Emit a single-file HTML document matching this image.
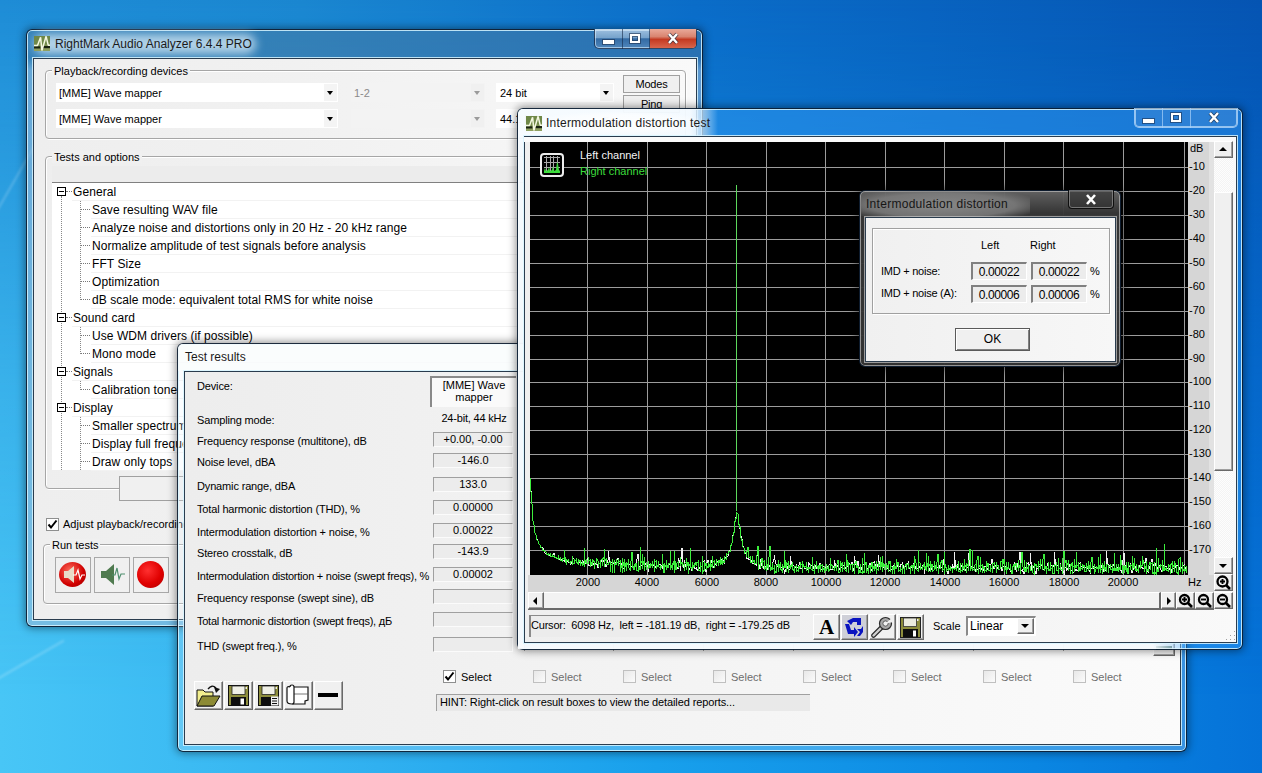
<!DOCTYPE html><html><head><meta charset="utf-8"><title>RMAA</title><style>
*{margin:0;padding:0;box-sizing:border-box}
html,body{width:1262px;height:773px;overflow:hidden}
body{position:relative;font-family:"Liberation Sans",sans-serif;font-size:11px;color:#000;
background:#1a88d8;}
.a{position:absolute}
.t{position:absolute;white-space:nowrap;line-height:1}
.fr{position:absolute;border:1px solid rgba(10,25,45,0.92);border-radius:6px;box-shadow:inset 0 0 0 1px rgba(215,245,255,0.85),0 0 9px 1px rgba(0,0,0,0.45)}
.cl{position:absolute;background:#f0f0f0;border:1px solid rgba(20,40,60,0.9);box-shadow:0 0 0 1px rgba(215,245,255,0.85)}
.gb{position:absolute;border:1px solid #a6a6a6;border-radius:4px;box-shadow:inset 1px 1px 0 #fff,1px 1px 0 #fff}
.gbl{position:absolute;background:#f0f0f0;padding:0 2px;font-size:11px;line-height:12px}
.btn{position:absolute;background:linear-gradient(#f4f4f4,#ececec 50%,#dfdfdf 51%,#d2d2d2);border:1px solid #707070;border-radius:3px}
.sb{position:absolute;background:#f0f0f0;border-top:1px solid #fff;border-left:1px solid #fff;border-right:1px solid #696969;border-bottom:1px solid #696969;box-shadow:inset -1px -1px 0 #a0a0a0}
.vb{position:absolute;background:#ececec;border-top:1px solid #a0a0a0;border-left:1px solid #a0a0a0;border-right:1px solid #fbfbfb;border-bottom:1px solid #fbfbfb;text-align:center;font-size:11px;line-height:13px}
.cb{position:absolute;width:13px;height:13px;border:1px solid #8e8f8f;background:linear-gradient(135deg,#dcdcdc,#fbfbfb)}
.cbd{position:absolute;width:13px;height:13px;border:1px solid #c0c0c0;background:linear-gradient(135deg,#e8e8e8,#fbfbfb)}
</style></head><body>
<div class="a" style="left:0;top:0;width:1262px;height:773px;background:linear-gradient(90deg,#48c6f6 0%,#30b0f0 30%,#18a0ec 52%,#0a86e2 82%,#0572d8 100%)"></div>
<div class="a" style="left:0;top:0;width:1262px;height:773px;background:linear-gradient(90deg,#1e8cd6 0%,#1a86d0 24%,#0a6cc8 55%,#0554b2 100%);-webkit-mask-image:linear-gradient(180deg,#000 0%,rgba(0,0,0,0.75) 20%,rgba(0,0,0,0.35) 50%,rgba(0,0,0,0) 90%)"></div>
<div class="a" style="left:-20px;top:662px;width:90px;height:2px;background:rgba(255,255,255,0.22);transform:rotate(-30deg);filter:blur(0.8px)"></div>
<div class="a" style="left:-40px;top:170px;width:120px;height:2px;background:rgba(255,255,255,0.2);transform:rotate(-60deg);filter:blur(1px)"></div>
<div class="fr" style="left:26px;top:29px;width:677px;height:598px;background:linear-gradient(180deg,rgba(85,115,145,0.42),rgba(85,115,145,0.42) 28px,rgba(170,188,212,0.5) 40px)"></div>
<div class="a" style="left:34px;top:34px;width:222px;height:20px;border-radius:10px;background:rgba(225,240,250,0.72);filter:blur(5px)"></div>
<svg class="a" style="left:34px;top:36px" width="16" height="15" viewBox="0 0 16 15"><rect width="16" height="15" fill="#7a9050"/><rect y="0" width="16" height="8" fill="#6f8848"/><rect y="11" width="16" height="4" fill="#8fa060"/><rect y="10.3" width="6.5" height="2.2" fill="#1a2410"/><rect x="9" y="10" width="7" height="2.2" fill="#1a2410"/><path d="M0 9.6 L3.5 9.6 L6.6 1.2 L7.9 14.5 L12.1 0.3 L14.2 9.2 L16 9.2" stroke="#f4f8e0" stroke-width="1.5" fill="none" stroke-linejoin="bevel"/></svg>
<div class="t" style="left:55px;top:38px;font-size:12px;color:#1a1a1a">RightMark Audio Analyzer 6.4.4 PRO</div>
<div class="a" style="left:594px;top:29px;width:103px;height:20px;border:1px solid rgba(20,40,70,0.8);border-top:none;border-radius:0 0 5px 5px;box-shadow:inset 0 0 0 1px rgba(220,240,255,0.6);background:linear-gradient(rgba(200,220,240,0.75),rgba(170,195,220,0.6) 45%,rgba(60,100,150,0.55) 52%,rgba(110,150,195,0.55));overflow:hidden"></div>
<div class="a" style="left:622px;top:29px;width:1px;height:20px;background:rgba(20,40,70,0.6)"></div>
<div class="a" style="left:649px;top:29px;width:1px;height:20px;background:rgba(20,40,70,0.6)"></div>
<div class="a" style="left:650px;top:29px;width:46px;height:19px;border-radius:0 0 4px 0;background:linear-gradient(#e9a99a,#d98470 40%,#c43a22 55%,#d8654c)"></div>
<div class="a" style="left:603px;top:40px;width:11px;height:4px;background:#fff;box-shadow:0 0 0 1px rgba(30,50,80,0.6)"></div>
<div class="a" style="left:630px;top:34px;width:10px;height:9px;border:2px solid #fff;box-shadow:0 0 0 1px rgba(30,50,80,0.6),inset 0 0 0 1px rgba(30,50,80,0.6)"></div>
<svg class="a" style="left:666px;top:32px" width="14" height="13"><path d="M3 2 L11 11 M11 2 L3 11" stroke="rgba(30,40,60,0.7)" stroke-width="4"/><path d="M3 2 L11 11 M11 2 L3 11" stroke="#fff" stroke-width="2.4"/></svg>
<div class="cl" style="left:33px;top:58px;width:664px;height:562px;background:linear-gradient(90deg,#eeeeee,#f1f1f1 40%,#f9f9f9)"></div>
<div class="gb" style="left:45px;top:70px;width:641px;height:69px"></div>
<div class="gbl" style="left:52px;top:65px">Playback/recording devices</div>
<div class="a" style="left:56px;top:83px;width:282px;height:19px;background:#ffffff"></div>
<div class="t" style="left:59px;top:88px;font-size:11px;color:#000">[MME] Wave mapper</div>
<div class="a" style="left:324px;top:84px;width:13px;height:17px;background:#f4f4f4"></div>
<div class="a" style="left:327px;top:91px;width:0;height:0;border-left:3.5px solid transparent;border-right:3.5px solid transparent;border-top:4px solid #000"></div>
<div class="a" style="left:351px;top:83px;width:134px;height:19px;background:#f3f3f3"></div>
<div class="t" style="left:354px;top:88px;font-size:11px;color:#8a8a8a">1-2</div>
<div class="a" style="left:471px;top:84px;width:13px;height:17px;background:#f0f0f0"></div>
<div class="a" style="left:474px;top:91px;width:0;height:0;border-left:3.5px solid transparent;border-right:3.5px solid transparent;border-top:4px solid #9a9a9a"></div>
<div class="a" style="left:496px;top:83px;width:118px;height:19px;background:#ffffff"></div>
<div class="t" style="left:500px;top:88px;font-size:11px;color:#000">24 bit</div>
<div class="a" style="left:600px;top:84px;width:13px;height:17px;background:#f4f4f4"></div>
<div class="a" style="left:603px;top:91px;width:0;height:0;border-left:3.5px solid transparent;border-right:3.5px solid transparent;border-top:4px solid #000"></div>
<div class="a" style="left:56px;top:109px;width:282px;height:19px;background:#ffffff"></div>
<div class="t" style="left:59px;top:114px;font-size:11px;color:#000">[MME] Wave mapper</div>
<div class="a" style="left:324px;top:110px;width:13px;height:17px;background:#f4f4f4"></div>
<div class="a" style="left:327px;top:117px;width:0;height:0;border-left:3.5px solid transparent;border-right:3.5px solid transparent;border-top:4px solid #000"></div>
<div class="a" style="left:351px;top:109px;width:134px;height:19px;background:#f3f3f3"></div>
<div class="t" style="left:354px;top:114px;font-size:11px;color:#8a8a8a"></div>
<div class="a" style="left:471px;top:110px;width:13px;height:17px;background:#f0f0f0"></div>
<div class="a" style="left:474px;top:117px;width:0;height:0;border-left:3.5px solid transparent;border-right:3.5px solid transparent;border-top:4px solid #9a9a9a"></div>
<div class="a" style="left:496px;top:109px;width:118px;height:19px;background:#ffffff"></div>
<div class="t" style="left:500px;top:114px;font-size:11px;color:#000">44.1 kHz</div>
<div class="a" style="left:600px;top:110px;width:13px;height:17px;background:#f4f4f4"></div>
<div class="a" style="left:603px;top:117px;width:0;height:0;border-left:3.5px solid transparent;border-right:3.5px solid transparent;border-top:4px solid #000"></div>
<div class="a" style="left:623px;top:75px;width:57px;height:18px;border:1px solid #a0a0a0;background:#f0f0f0"></div>
<div class="t" style="left:623px;top:79px;width:57px;text-align:center;font-size:11px;letter-spacing:-0.2px">Modes</div>
<div class="a" style="left:623px;top:95px;width:57px;height:18px;border:1px solid #a0a0a0;background:#f0f0f0"></div>
<div class="t" style="left:623px;top:99px;width:57px;text-align:center;font-size:11px;letter-spacing:-0.2px">Ping</div>
<div class="gb" style="left:45px;top:156px;width:641px;height:333px"></div>
<div class="gbl" style="left:52px;top:151px">Tests and options</div>
<div class="a" style="left:52px;top:166px;width:628px;height:304px;background:#fff"></div>
<div class="a" style="left:52px;top:166px;width:628px;height:17px;background:#ececec;border-bottom:1px solid #808080"></div>
<div class="a" style="left:61px;top:196px;width:0;height:274px;border-left:1px dotted #888"></div>
<div class="a" style="left:80px;top:200px;width:0;height:100px;border-left:1px dotted #888"></div>
<div class="a" style="left:80px;top:326px;width:0;height:28px;border-left:1px dotted #888"></div>
<div class="a" style="left:80px;top:380px;width:0;height:10px;border-left:1px dotted #888"></div>
<div class="a" style="left:80px;top:416px;width:0;height:54px;border-left:1px dotted #888"></div>
<div class="a" style="left:72px;top:200px;width:600px;height:1px;background:#f2f2f2"></div>
<div class="a" style="left:57px;top:187px;width:9px;height:9px;border:1px solid #000;background:#fff"></div>
<div class="a" style="left:59px;top:191px;width:5px;height:1px;background:#000"></div>
<div class="a" style="left:66px;top:191px;width:6px;height:0;border-top:1px dotted #777"></div>
<div class="t" style="left:73px;top:186px;font-size:12px;letter-spacing:0.07px">General</div>
<div class="a" style="left:91px;top:218px;width:600px;height:1px;background:#f2f2f2"></div>
<div class="a" style="left:81px;top:209px;width:9px;height:0;border-top:1px dotted #777"></div>
<div class="t" style="left:92px;top:204px;font-size:12px;letter-spacing:0.07px">Save resulting WAV file</div>
<div class="a" style="left:91px;top:236px;width:600px;height:1px;background:#f2f2f2"></div>
<div class="a" style="left:81px;top:227px;width:9px;height:0;border-top:1px dotted #777"></div>
<div class="t" style="left:92px;top:222px;font-size:12px;letter-spacing:0.07px">Analyze noise and distortions only in 20 Hz - 20 kHz range</div>
<div class="a" style="left:91px;top:254px;width:600px;height:1px;background:#f2f2f2"></div>
<div class="a" style="left:81px;top:245px;width:9px;height:0;border-top:1px dotted #777"></div>
<div class="t" style="left:92px;top:240px;font-size:12px;letter-spacing:0.07px">Normalize amplitude of test signals before analysis</div>
<div class="a" style="left:91px;top:272px;width:600px;height:1px;background:#f2f2f2"></div>
<div class="a" style="left:81px;top:263px;width:9px;height:0;border-top:1px dotted #777"></div>
<div class="t" style="left:92px;top:258px;font-size:12px;letter-spacing:0.07px">FFT Size</div>
<div class="a" style="left:91px;top:290px;width:600px;height:1px;background:#f2f2f2"></div>
<div class="a" style="left:81px;top:281px;width:9px;height:0;border-top:1px dotted #777"></div>
<div class="t" style="left:92px;top:276px;font-size:12px;letter-spacing:0.07px">Optimization</div>
<div class="a" style="left:91px;top:308px;width:600px;height:1px;background:#f2f2f2"></div>
<div class="a" style="left:81px;top:299px;width:9px;height:0;border-top:1px dotted #777"></div>
<div class="t" style="left:92px;top:294px;font-size:12px;letter-spacing:0.07px">dB scale mode: equivalent total RMS for white noise</div>
<div class="a" style="left:72px;top:326px;width:600px;height:1px;background:#f2f2f2"></div>
<div class="a" style="left:57px;top:313px;width:9px;height:9px;border:1px solid #000;background:#fff"></div>
<div class="a" style="left:59px;top:317px;width:5px;height:1px;background:#000"></div>
<div class="a" style="left:66px;top:317px;width:6px;height:0;border-top:1px dotted #777"></div>
<div class="t" style="left:73px;top:312px;font-size:12px;letter-spacing:0.07px">Sound card</div>
<div class="a" style="left:91px;top:344px;width:600px;height:1px;background:#f2f2f2"></div>
<div class="a" style="left:81px;top:335px;width:9px;height:0;border-top:1px dotted #777"></div>
<div class="t" style="left:92px;top:330px;font-size:12px;letter-spacing:0.07px">Use WDM drivers (if possible)</div>
<div class="a" style="left:91px;top:362px;width:600px;height:1px;background:#f2f2f2"></div>
<div class="a" style="left:81px;top:353px;width:9px;height:0;border-top:1px dotted #777"></div>
<div class="t" style="left:92px;top:348px;font-size:12px;letter-spacing:0.07px">Mono mode</div>
<div class="a" style="left:72px;top:380px;width:600px;height:1px;background:#f2f2f2"></div>
<div class="a" style="left:57px;top:367px;width:9px;height:9px;border:1px solid #000;background:#fff"></div>
<div class="a" style="left:59px;top:371px;width:5px;height:1px;background:#000"></div>
<div class="a" style="left:66px;top:371px;width:6px;height:0;border-top:1px dotted #777"></div>
<div class="t" style="left:73px;top:366px;font-size:12px;letter-spacing:0.07px">Signals</div>
<div class="a" style="left:91px;top:398px;width:600px;height:1px;background:#f2f2f2"></div>
<div class="a" style="left:81px;top:389px;width:9px;height:0;border-top:1px dotted #777"></div>
<div class="t" style="left:92px;top:384px;font-size:12px;letter-spacing:0.07px">Calibration tone</div>
<div class="a" style="left:72px;top:416px;width:600px;height:1px;background:#f2f2f2"></div>
<div class="a" style="left:57px;top:403px;width:9px;height:9px;border:1px solid #000;background:#fff"></div>
<div class="a" style="left:59px;top:407px;width:5px;height:1px;background:#000"></div>
<div class="a" style="left:66px;top:407px;width:6px;height:0;border-top:1px dotted #777"></div>
<div class="t" style="left:73px;top:402px;font-size:12px;letter-spacing:0.07px">Display</div>
<div class="a" style="left:91px;top:434px;width:600px;height:1px;background:#f2f2f2"></div>
<div class="a" style="left:81px;top:425px;width:9px;height:0;border-top:1px dotted #777"></div>
<div class="t" style="left:92px;top:420px;font-size:12px;letter-spacing:0.07px">Smaller spectrum</div>
<div class="a" style="left:91px;top:452px;width:600px;height:1px;background:#f2f2f2"></div>
<div class="a" style="left:81px;top:443px;width:9px;height:0;border-top:1px dotted #777"></div>
<div class="t" style="left:92px;top:438px;font-size:12px;letter-spacing:0.07px">Display full frequency range</div>
<div class="a" style="left:91px;top:470px;width:600px;height:1px;background:#f2f2f2"></div>
<div class="a" style="left:81px;top:461px;width:9px;height:0;border-top:1px dotted #777"></div>
<div class="t" style="left:92px;top:456px;font-size:12px;letter-spacing:0.07px">Draw only tops</div>
<div class="a" style="left:119px;top:476px;width:580px;height:25px;border:1px solid #a0a0a0;border-right:none;background:#f0f0f0"></div>
<div class="cb" style="left:46px;top:518px;background:#fff"></div>
<svg class="a" style="left:47px;top:519px" width="11" height="11"><path d="M1.5 5.5 L4 8.5 L9.5 1.5" stroke="#000" stroke-width="2" fill="none"/></svg>
<div class="t" style="left:63px;top:519px;font-size:11px">Adjust playback/recording levels</div>
<div class="gb" style="left:43px;top:544px;width:640px;height:60px"></div>
<div class="gbl" style="left:50px;top:539px">Run tests</div>
<div class="a" style="left:55px;top:557px;width:36px;height:36px;border:1px solid #a8a8a8;background:#f0f0f0"></div>
<div class="a" style="left:94px;top:557px;width:36px;height:36px;border:1px solid #a8a8a8;background:#f0f0f0"></div>
<div class="a" style="left:133px;top:557px;width:36px;height:36px;border:1px solid #a8a8a8;background:#f0f0f0"></div>
<div class="a" style="left:59px;top:562px;width:27px;height:25px;border-radius:50%;background:radial-gradient(circle at 40% 35%,#ff6a5a,#d00000 60%,#900)"></div>
<svg class="a" style="left:59px;top:562px" width="27" height="25"><path d="M5 9 h4 l6-5 v17 l-6-5 h-4z" fill="#e8dcc8"/><path d="M14 13 h3 l2-5 l2 9 l2-4 h3" stroke="#fff" stroke-width="1.2" fill="none"/></svg>
<svg class="a" style="left:98px;top:562px" width="28" height="25"><path d="M3 9 h5 l8-7 v21 l-8-7 h-5z" fill="#4f7a4f"/><path d="M14 13 h3 l2-7 l2 11 l2-5 h4" stroke="#4f8f6f" stroke-width="1.2" fill="none"/></svg>
<div class="a" style="left:137px;top:561px;width:27px;height:27px;border-radius:50%;background:radial-gradient(circle at 40% 35%,#ff3030,#e00000 55%,#b00000)"></div>
<div class="fr" style="left:177px;top:343px;width:1010px;height:409px;background:rgba(235,248,255,0.22)"></div>
<div class="a" style="left:178px;top:344px;width:1008px;height:27px;border-radius:5px 5px 0 0;background:rgba(250,252,252,0.75)"></div>
<div class="t" style="left:185px;top:351px;font-size:12px;color:#1a1a1a">Test results</div>
<div class="cl" style="left:184px;top:371px;width:997px;height:374px;background:linear-gradient(90deg,#ededed,#f1f1f1 30%,#fbfbfb)"></div>
<div class="t" style="left:197px;top:381px;font-size:11px;letter-spacing:-0.15px">Device:</div>
<div class="t" style="left:197px;top:415px;font-size:11px;letter-spacing:-0.15px">Sampling mode:</div>
<div class="t" style="left:197px;top:436px;font-size:11px;letter-spacing:-0.15px">Frequency response (multitone), dB</div>
<div class="vb" style="left:433px;top:432px;width:80px;height:15px">+0.00, -0.00</div>
<div class="t" style="left:197px;top:457px;font-size:11px;letter-spacing:-0.15px">Noise level, dBA</div>
<div class="vb" style="left:433px;top:453px;width:80px;height:15px">-146.0</div>
<div class="t" style="left:197px;top:481px;font-size:11px;letter-spacing:-0.15px">Dynamic range, dBA</div>
<div class="vb" style="left:433px;top:477px;width:80px;height:15px">133.0</div>
<div class="t" style="left:197px;top:504px;font-size:11px;letter-spacing:-0.15px">Total harmonic distortion (THD), %</div>
<div class="vb" style="left:433px;top:500px;width:80px;height:15px">0.00000</div>
<div class="t" style="left:197px;top:527px;font-size:11px;letter-spacing:-0.15px">Intermodulation distortion + noise, %</div>
<div class="vb" style="left:433px;top:523px;width:80px;height:15px">0.00022</div>
<div class="t" style="left:197px;top:548px;font-size:11px;letter-spacing:-0.15px">Stereo crosstalk, dB</div>
<div class="vb" style="left:433px;top:544px;width:80px;height:15px">-143.9</div>
<div class="t" style="left:197px;top:571px;font-size:11px;letter-spacing:-0.25px">Intermodulation distortion + noise (swept freqs), %</div>
<div class="vb" style="left:433px;top:567px;width:80px;height:15px">0.00002</div>
<div class="t" style="left:197px;top:593px;font-size:11px;letter-spacing:-0.15px">Frequency response (swept sine), dB</div>
<div class="vb" style="left:433px;top:589px;width:80px;height:15px"></div>
<div class="t" style="left:197px;top:616px;font-size:11px;letter-spacing:-0.25px">Total harmonic distortion (swept freqs), дБ</div>
<div class="vb" style="left:433px;top:612px;width:80px;height:15px"></div>
<div class="t" style="left:197px;top:641px;font-size:11px;letter-spacing:-0.15px">THD (swept freq.), %</div>
<div class="vb" style="left:433px;top:637px;width:80px;height:15px"></div>
<div class="a" style="left:430px;top:376px;width:86px;height:31px;border-top:2px solid #8a8a8a;border-left:2px solid #8a8a8a;background:#fafafa"></div>
<div class="t" style="left:432px;top:379px;width:84px;text-align:center;font-size:11px;line-height:12px;white-space:normal">[MME] Wave mapper</div>
<div class="t" style="left:432px;top:413px;width:84px;text-align:center;font-size:11px;letter-spacing:-0.2px">24-bit, 44 kHz</div>
<div class="a" style="left:524px;top:640px;width:1px;height:11px;background:#9a9a9a"></div>
<div class="a" style="left:613px;top:640px;width:1px;height:11px;background:#9a9a9a"></div>
<div class="a" style="left:703px;top:640px;width:1px;height:11px;background:#9a9a9a"></div>
<div class="a" style="left:793px;top:640px;width:1px;height:11px;background:#9a9a9a"></div>
<div class="a" style="left:883px;top:640px;width:1px;height:11px;background:#9a9a9a"></div>
<div class="a" style="left:973px;top:640px;width:1px;height:11px;background:#9a9a9a"></div>
<div class="a" style="left:1063px;top:640px;width:1px;height:11px;background:#9a9a9a"></div>
<div class="a" style="left:1153px;top:640px;width:1px;height:11px;background:#9a9a9a"></div>
<div class="sb" style="left:1153px;top:630px;width:22px;height:26px"></div>
<div class="a" style="left:1156px;top:646px;width:16px;height:4px;background:#1a3a1a"></div>
<div class="sb" style="left:194px;top:681px;width:29px;height:29px"></div>
<div class="sb" style="left:224px;top:681px;width:29px;height:29px"></div>
<div class="sb" style="left:254px;top:681px;width:29px;height:29px"></div>
<div class="sb" style="left:284px;top:681px;width:29px;height:29px"></div>
<div class="sb" style="left:314px;top:681px;width:29px;height:29px"></div>
<svg class="a" style="left:196px;top:684px" width="25" height="23" viewBox="0 0 25 23"><path d="M1 6 h6 l2 2 h8 v14 h-16z" fill="#f2ee8e" stroke="#111" stroke-width="1"/><path d="M1 22 l5 -10 h18 l-6 10z" fill="#8c8a34" stroke="#111" stroke-width="1"/><path d="M12 5 Q16 0 20 4" stroke="#111" stroke-width="1.3" fill="none"/><path d="M18 3 L24 5 L20 9z" fill="#111"/></svg>
<svg class="a" style="left:228px;top:685px" width="21" height="21"><rect x="0.5" y="0.5" width="20" height="20" fill="#8e8e3c" stroke="#111"/><rect x="4" y="1" width="13" height="8.5" fill="#f0f0e6" stroke="#222" stroke-width="0.8"/><rect x="17.5" y="2" width="1.5" height="2" fill="#eee"/><rect x="3" y="12" width="15" height="8.5" fill="#0e0e0e"/><rect x="12.5" y="13.5" width="3.5" height="6" fill="#fff"/></svg>
<svg class="a" style="left:258px;top:685px" width="21" height="21"><rect x="0.5" y="0.5" width="20" height="20" fill="#8e8e3c" stroke="#111"/><rect x="4" y="1" width="13" height="8.5" fill="#f0f0e6" stroke="#222" stroke-width="0.8"/><rect x="17.5" y="2" width="1.5" height="2" fill="#eee"/><rect x="3" y="12" width="10" height="8.5" fill="#0e0e0e"/><rect x="13" y="11.5" width="7.5" height="9" fill="#f0f0f0"/><path d="M14 13.5 h5 M14 16 h5 M14 18.5 h5" stroke="#111" stroke-width="1"/></svg>
<svg class="a" style="left:286px;top:684px" width="24" height="21" viewBox="0 0 24 21"><path d="M7 3 h15 v13 l-3 1 v3 h-12z" fill="#fff" stroke="#111" stroke-width="1.2"/><path d="M8 10 h14" stroke="#555" stroke-width="0.8"/><path d="M4 3 Q4 1 6 1 Q8 1 8 3 v15 Q8 20 6 20 Q1 20 1 17 v-13 Q1 2 4 3" fill="#fff" stroke="#111" stroke-width="1.2"/></svg>
<div class="a" style="left:318px;top:693px;width:20px;height:4px;background:#000"></div>
<div class="cb" style="left:443px;top:670px;background:#fff"></div>
<svg class="a" style="left:444px;top:671px" width="11" height="11"><path d="M1.5 5.5 L4 8.5 L9.5 1.5" stroke="#000" stroke-width="2" fill="none"/></svg>
<div class="t" style="left:461px;top:672px;font-size:11px">Select</div>
<div class="cbd" style="left:533px;top:670px"></div>
<div class="t" style="left:551px;top:672px;font-size:11px;color:#6d6d6d">Select</div>
<div class="cbd" style="left:623px;top:670px"></div>
<div class="t" style="left:641px;top:672px;font-size:11px;color:#6d6d6d">Select</div>
<div class="cbd" style="left:713px;top:670px"></div>
<div class="t" style="left:731px;top:672px;font-size:11px;color:#6d6d6d">Select</div>
<div class="cbd" style="left:803px;top:670px"></div>
<div class="t" style="left:821px;top:672px;font-size:11px;color:#6d6d6d">Select</div>
<div class="cbd" style="left:893px;top:670px"></div>
<div class="t" style="left:911px;top:672px;font-size:11px;color:#6d6d6d">Select</div>
<div class="cbd" style="left:983px;top:670px"></div>
<div class="t" style="left:1001px;top:672px;font-size:11px;color:#6d6d6d">Select</div>
<div class="cbd" style="left:1073px;top:670px"></div>
<div class="t" style="left:1091px;top:672px;font-size:11px;color:#6d6d6d">Select</div>
<div class="a" style="left:436px;top:694px;width:374px;height:17px;border-top:1px solid #a0a0a0;border-left:1px solid #a0a0a0;background:#e9e9e9"></div>
<div class="t" style="left:440px;top:697px;font-size:11px;letter-spacing:-0.12px">HINT: Right-click on result boxes to view the detailed reports...</div>
<div class="fr" style="left:517px;top:108px;width:726px;height:542px;background:rgba(60,165,255,0.38)"></div>
<div class="a" style="left:518px;top:109px;width:725px;height:28px;border-radius:5px 5px 0 0;background:linear-gradient(90deg,rgba(250,253,255,0.95) 0px,rgba(248,252,255,0.93) 172px,rgba(230,245,255,0.5) 188px,rgba(220,240,255,0) 200px)"></div>
<div class="a" style="left:518px;top:137px;width:6px;height:511px;background:rgba(248,251,253,0.95)"></div>
<div class="a" style="left:518px;top:643px;width:668px;height:6px;background:linear-gradient(90deg,rgba(248,251,253,0.95) 95%,rgba(248,251,253,0))"></div>
<div class="a" style="left:530px;top:111px;width:180px;height:24px;background:radial-gradient(ellipse 90px 12px at 50% 50%,rgba(255,255,255,0.9),rgba(255,255,255,0.5) 70%,rgba(255,255,255,0) 100%)"></div>
<svg class="a" style="left:526px;top:116px" width="16" height="15" viewBox="0 0 16 15"><rect width="16" height="15" fill="#7a9050"/><rect y="0" width="16" height="8" fill="#6f8848"/><rect y="11" width="16" height="4" fill="#8fa060"/><rect y="10.3" width="6.5" height="2.2" fill="#1a2410"/><rect x="9" y="10" width="7" height="2.2" fill="#1a2410"/><path d="M0 9.6 L3.5 9.6 L6.6 1.2 L7.9 14.5 L12.1 0.3 L14.2 9.2 L16 9.2" stroke="#f4f8e0" stroke-width="1.5" fill="none" stroke-linejoin="bevel"/></svg>
<div class="t" style="left:546px;top:117px;font-size:12px;letter-spacing:0.22px;color:#1a1a1a">Intermodulation distortion test</div>
<div class="a" style="left:1134px;top:108px;width:104px;height:20px;border:1px solid rgba(170,210,250,0.85);border-top:none;border-radius:0 0 5px 5px;box-shadow:inset 0 0 0 1px rgba(220,240,255,0.6);background:rgba(100,150,215,0.25);overflow:hidden"></div>
<div class="a" style="left:1162px;top:108px;width:1px;height:20px;background:rgba(170,210,250,0.7)"></div>
<div class="a" style="left:1190px;top:108px;width:1px;height:20px;background:rgba(170,210,250,0.7)"></div>
<div class="a" style="left:1143px;top:119px;width:11px;height:4px;background:#fff;box-shadow:0 0 0 1px rgba(30,50,80,0.6)"></div>
<div class="a" style="left:1171px;top:113px;width:10px;height:9px;border:2px solid #fff;box-shadow:0 0 0 1px rgba(30,50,80,0.6),inset 0 0 0 1px rgba(30,50,80,0.6)"></div>
<svg class="a" style="left:1207px;top:111px" width="14" height="13"><path d="M3 2 L11 11 M11 2 L3 11" stroke="rgba(30,40,60,0.7)" stroke-width="4"/><path d="M3 2 L11 11 M11 2 L3 11" stroke="#fff" stroke-width="2.4"/></svg>
<div class="cl" style="left:524px;top:136px;width:713px;height:507px;background:linear-gradient(90deg,#efefef,#f2f2f2 50%,#f9f9f9)"></div>
<div class="a" style="left:524px;top:137px;width:712px;height:5px;background:#fafafa"></div>
<div class="a" style="left:530px;top:142px;width:658px;height:433px;background:#000"></div>
<svg class="a" style="left:530px;top:142px" width="658" height="433"><path d="M0 25.5H658 M0 49.5H658 M0 73.5H658 M0 97.5H658 M0 121.5H658 M0 145.5H658 M0 169.5H658 M0 193.5H658 M0 217.5H658 M0 240.5H658 M0 264.5H658 M0 288.5H658 M0 312.5H658 M0 336.5H658 M0 360.5H658 M0 384.5H658 M0 408.5H658 M57.5 0V433 M117.5 0V433 M176.5 0V433 M236.5 0V433 M295.5 0V433 M355.5 0V433 M414.5 0V433 M474.5 0V433 M533.5 0V433 M593.5 0V433 M654.5 0V433" stroke="#9c9c9c" stroke-width="1" fill="none"/><path d="M0 336 L2 362 L2 375 L4 383 L4 389 L6 393 L6 396 L8 399 L8 401 L10 403 L10 405 L12 406 L12 405 L14 408 L14 410 L16 412 L16 412 L18 412 L18 413 L20 413 L20 413 L22 415 L22 415 L24 411 L24 415 L26 416 L26 415 L28 417 L28 417 L30 417 L30 419 L32 417 L32 418 L34 418 L34 419 L36 420 L36 418 L38 420 L38 421 L40 420 L40 423 L42 420 L42 416 L44 417 L44 418 L46 419 L46 421 L48 420 L48 420 L50 421 L50 419 L52 421 L52 418 L54 421 L54 423 L56 421 L56 420 L58 416 L58 423 L60 423 L60 420 L62 424 L62 424 L64 421 L64 420 L66 422 L66 417 L68 426 L68 420 L70 422 L70 423 L72 417 L72 422 L74 418 L74 420 L76 425 L76 423 L78 418 L78 409 L80 420 L80 421 L82 420 L82 423 L84 420 L84 424 L86 420 L86 420 L88 416 L88 421 L90 422 L90 419 L92 423 L92 425 L94 427 L94 420 L96 425 L96 423 L98 422 L98 422 L100 422 L100 426 L102 424 L102 425 L104 425 L104 426 L106 424 L106 422 L108 412 L108 423 L110 426 L110 423 L112 424 L112 421 L114 423 L114 425 L116 421 L116 422 L118 425 L118 430 L120 422 L120 424 L122 423 L122 423 L124 423 L124 422 L126 426 L126 426 L128 423 L128 422 L130 423 L130 422 L132 425 L132 423 L134 427 L134 422 L136 425 L136 427 L138 424 L138 424 L140 422 L140 426 L142 424 L142 422 L144 421 L144 424 L146 422 L146 423 L148 427 L148 416 L150 421 L150 429 L152 406 L152 421 L154 426 L154 418 L156 425 L156 425 L158 423 L158 429 L160 426 L160 423 L162 429 L162 421 L164 425 L164 426 L166 427 L166 425 L168 429 L168 428 L170 425 L170 424 L172 424 L172 420 L174 419 L174 423 L176 430 L176 423 L178 418 L178 423 L180 424 L180 423 L182 418 L182 422 L184 426 L184 422 L186 423 L186 420 L188 419 L188 420 L190 419 L190 420 L192 417 L192 417 L194 420 L194 417 L196 415 L196 416 L198 414 L198 410 L200 408 L200 405 L202 401 L202 396 L204 390 L204 383 L206 375 L206 370 L208 372 L208 379 L210 387 L210 392 L212 397 L212 402 L214 406 L214 409 L216 412 L216 416 L218 416 L218 418 L220 417 L220 416 L222 420 L222 421 L224 422 L224 422 L226 423 L226 421 L228 408 L228 418 L230 427 L230 417 L232 424 L232 422 L234 427 L234 424 L236 424 L236 418 L238 428 L238 422 L240 425 L240 425 L242 426 L242 423 L244 417 L244 413 L246 422 L246 422 L248 425 L248 427 L250 423 L250 425 L252 426 L252 425 L254 428 L254 432 L256 427 L256 422 L258 427 L258 428 L260 427 L260 414 L262 424 L262 423 L264 424 L264 427 L266 424 L266 425 L268 426 L268 426 L270 420 L270 427 L272 426 L272 423 L274 424 L274 427 L276 426 L276 427 L278 427 L278 420 L280 423 L280 423 L282 424 L282 429 L284 424 L284 426 L286 423 L286 426 L288 427 L288 429 L290 421 L290 427 L292 427 L292 424 L294 424 L294 425 L296 426 L296 425 L298 424 L298 424 L300 422 L300 427 L302 427 L302 423 L304 426 L304 418 L306 424 L306 426 L308 423 L308 429 L310 426 L310 424 L312 426 L312 423 L314 424 L314 424 L316 427 L316 427 L318 422 L318 420 L320 423 L320 424 L322 420 L322 423 L324 429 L324 414 L326 423 L326 426 L328 419 L328 423 L330 427 L330 430 L332 425 L332 424 L334 422 L334 422 L336 423 L336 426 L338 426 L338 426 L340 421 L340 425 L342 429 L342 422 L344 420 L344 428 L346 422 L346 420 L348 425 L348 413 L350 425 L350 422 L352 421 L352 424 L354 426 L354 425 L356 423 L356 425 L358 427 L358 427 L360 429 L360 428 L362 427 L362 425 L364 423 L364 427 L366 424 L366 421 L368 425 L368 424 L370 424 L370 423 L372 422 L372 420 L374 426 L374 428 L376 422 L376 424 L378 421 L378 426 L380 427 L380 425 L382 425 L382 427 L384 421 L384 429 L386 424 L386 426 L388 426 L388 422 L390 426 L390 423 L392 427 L392 423 L394 424 L394 432 L396 424 L396 425 L398 423 L398 423 L400 429 L400 425 L402 428 L402 424 L404 424 L404 425 L406 425 L406 425 L408 425 L408 418 L410 427 L410 427 L412 425 L412 430 L414 417 L414 423 L416 426 L416 427 L418 432 L418 427 L420 427 L420 425 L422 425 L422 422 L424 427 L424 410 L426 425 L426 429 L428 422 L428 430 L430 426 L430 426 L432 423 L432 426 L434 428 L434 425 L436 429 L436 425 L438 426 L438 411 L440 424 L440 424 L442 425 L442 426 L444 425 L444 425 L446 430 L446 427 L448 428 L448 427 L450 426 L450 424 L452 428 L452 426 L454 429 L454 425 L456 424 L456 430 L458 426 L458 422 L460 423 L460 428 L462 417 L462 422 L464 427 L464 422 L466 425 L466 428 L468 425 L468 428 L470 427 L470 421 L472 429 L472 426 L474 424 L474 424 L476 425 L476 428 L478 427 L478 425 L480 428 L480 425 L482 431 L482 424 L484 424 L484 420 L486 428 L486 430 L488 421 L488 427 L490 410 L490 429 L492 428 L492 427 L494 432 L494 425 L496 425 L496 422 L498 421 L498 423 L500 422 L500 411 L502 428 L502 428 L504 424 L504 425 L506 432 L506 425 L508 427 L508 425 L510 424 L510 425 L512 423 L512 427 L514 427 L514 428 L516 424 L516 427 L518 421 L518 426 L520 428 L520 423 L522 423 L522 426 L524 423 L524 410 L526 423 L526 423 L528 423 L528 425 L530 427 L530 421 L532 429 L532 428 L534 431 L534 424 L536 426 L536 429 L538 426 L538 420 L540 425 L540 429 L542 428 L542 432 L544 430 L544 425 L546 429 L546 427 L548 429 L548 422 L550 421 L550 424 L552 425 L552 423 L554 426 L554 424 L556 426 L556 421 L558 427 L558 427 L560 430 L560 427 L562 426 L562 422 L564 427 L564 425 L566 425 L566 425 L568 426 L568 426 L570 423 L570 420 L572 426 L572 423 L574 430 L574 420 L576 429 L576 409 L578 422 L578 428 L580 423 L580 425 L582 424 L582 425 L584 422 L584 426 L586 426 L586 426 L588 425 L588 427 L590 427 L590 426 L592 431 L592 425 L594 411 L594 422 L596 424 L596 424 L598 430 L598 426 L600 423 L600 425 L602 431 L602 430 L604 426 L604 421 L606 428 L606 430 L608 427 L608 428 L610 423 L610 425 L612 425 L612 426 L614 427 L614 425 L616 416 L616 425 L618 430 L618 431 L620 424 L620 423 L622 417 L622 426 L624 422 L624 426 L626 421 L626 423 L628 428 L628 425 L630 423 L630 426 L632 430 L632 421 L634 425 L634 424 L636 424 L636 427 L638 426 L638 429 L640 426 L640 423 L642 431 L642 427 L644 426 L644 421 L646 426 L646 423 L648 424 L648 421 L650 428 L650 426 L652 425 L652 424 L654 423 L654 424 L656 427" stroke="#f0f0f0" stroke-width="1" fill="none" shape-rendering="crispEdges"/><path d="M0 336 L0 337 L0 337 L2 362 L2 362 L2 362 L2 375 L2 375 L2 375 L4 383 L4 383 L4 383 L4 389 L4 389 L4 389 L6 393 L6 393 L6 393 L6 396 L6 396 L6 397 L8 399 L8 399 L8 399 L8 401 L8 401 L8 401 L10 403 L10 403 L10 403 L10 405 L10 405 L10 405 L12 406 L12 406 L12 408 L12 407 L12 406 L12 408 L14 409 L14 408 L14 408 L14 409 L14 409 L14 409 L16 410 L16 410 L16 410 L16 412 L16 411 L16 412 L18 412 L18 412 L18 411 L18 413 L18 414 L18 413 L20 412 L20 413 L20 412 L20 414 L20 415 L20 414 L22 414 L22 412 L22 412 L22 414 L22 414 L22 414 L24 414 L24 415 L24 414 L24 415 L24 413 L24 415 L26 416 L26 415 L26 415 L26 417 L26 416 L26 415 L28 417 L28 413 L28 415 L28 418 L28 415 L28 417 L30 416 L30 416 L30 419 L30 416 L30 416 L30 419 L32 418 L32 418 L32 420 L32 418 L32 417 L32 417 L34 416 L34 417 L34 417 L34 416 L34 418 L34 408 L36 421 L36 423 L36 417 L36 418 L36 419 L36 418 L38 419 L38 420 L38 418 L38 417 L38 418 L38 419 L40 421 L40 419 L40 419 L40 420 L40 420 L40 419 L42 420 L42 421 L42 414 L42 423 L42 417 L42 421 L44 421 L44 417 L44 420 L44 420 L44 421 L44 417 L46 419 L46 419 L46 421 L46 419 L46 416 L46 418 L48 422 L48 423 L48 417 L48 420 L48 420 L48 422 L50 418 L50 424 L50 423 L50 421 L50 420 L50 421 L52 422 L52 424 L52 420 L52 419 L52 420 L52 420 L54 423 L54 416 L54 406 L54 424 L54 421 L54 425 L56 418 L56 417 L56 422 L56 421 L56 418 L56 421 L58 421 L58 420 L58 420 L58 415 L58 419 L58 420 L60 418 L60 425 L60 419 L60 422 L60 418 L60 425 L62 420 L62 424 L62 423 L62 423 L62 421 L62 417 L64 420 L64 427 L64 423 L64 423 L64 419 L64 424 L66 422 L66 422 L66 421 L66 420 L66 421 L66 416 L68 419 L68 423 L68 424 L68 421 L68 425 L68 421 L70 421 L70 422 L70 426 L70 424 L70 422 L70 419 L72 417 L72 424 L72 424 L72 417 L72 416 L72 419 L74 415 L74 407 L74 423 L74 419 L74 425 L74 421 L76 417 L76 419 L76 420 L76 418 L76 416 L76 423 L78 422 L78 420 L78 423 L78 422 L78 421 L78 421 L80 420 L80 430 L80 426 L80 424 L80 427 L80 422 L82 423 L82 431 L82 419 L82 423 L82 417 L82 420 L84 421 L84 421 L84 431 L84 418 L84 422 L84 424 L86 421 L86 417 L86 423 L86 420 L86 417 L86 420 L88 420 L88 424 L88 417 L88 419 L88 420 L88 421 L90 419 L90 425 L90 423 L90 428 L90 422 L90 430 L92 423 L92 417 L92 422 L92 428 L92 431 L92 416 L94 424 L94 430 L94 418 L94 418 L94 419 L94 417 L96 425 L96 425 L96 429 L96 428 L96 426 L96 420 L98 423 L98 424 L98 424 L98 423 L98 417 L98 424 L100 428 L100 419 L100 423 L100 423 L100 426 L100 429 L102 410 L102 426 L102 426 L102 420 L102 426 L102 420 L104 428 L104 424 L104 424 L104 422 L104 425 L104 428 L106 421 L106 424 L106 424 L106 427 L106 429 L106 427 L108 429 L108 430 L108 426 L108 422 L108 419 L108 422 L110 428 L110 423 L110 427 L110 405 L110 419 L110 423 L112 419 L112 423 L112 417 L112 424 L112 412 L112 427 L114 419 L114 426 L114 429 L114 415 L114 427 L114 424 L116 425 L116 424 L116 422 L116 420 L116 428 L116 423 L118 422 L118 427 L118 419 L118 427 L118 422 L118 419 L120 426 L120 424 L120 425 L120 421 L120 423 L120 421 L122 424 L122 421 L122 424 L122 419 L122 426 L122 423 L124 422 L124 423 L124 430 L124 417 L124 428 L124 420 L126 419 L126 424 L126 425 L126 423 L126 419 L126 427 L128 423 L128 421 L128 419 L128 423 L128 424 L128 424 L130 426 L130 424 L130 425 L130 423 L130 424 L130 428 L132 424 L132 424 L132 420 L132 423 L132 419 L132 412 L134 431 L134 421 L134 426 L134 422 L134 427 L134 427 L136 423 L136 428 L136 418 L136 421 L136 425 L136 421 L138 426 L138 422 L138 423 L138 425 L138 421 L138 421 L140 421 L140 420 L140 422 L140 425 L140 409 L140 428 L142 423 L142 422 L142 421 L142 425 L142 425 L142 428 L144 419 L144 414 L144 431 L144 424 L144 424 L144 409 L146 428 L146 422 L146 421 L146 426 L146 422 L146 422 L148 420 L148 420 L148 423 L148 424 L148 423 L148 426 L150 424 L150 422 L150 423 L150 422 L150 415 L150 424 L152 420 L152 421 L152 424 L152 425 L152 424 L152 424 L154 422 L154 429 L154 425 L154 428 L154 428 L154 422 L156 420 L156 425 L156 423 L156 428 L156 424 L156 416 L158 424 L158 432 L158 432 L158 427 L158 430 L158 420 L160 424 L160 406 L160 422 L160 426 L160 419 L160 424 L162 427 L162 425 L162 420 L162 427 L162 423 L162 429 L164 423 L164 423 L164 421 L164 423 L164 421 L164 425 L166 420 L166 420 L166 424 L166 424 L166 421 L166 421 L168 420 L168 423 L168 418 L168 424 L168 424 L168 428 L170 429 L170 423 L170 422 L170 429 L170 420 L170 423 L172 425 L172 432 L172 423 L172 414 L172 419 L172 431 L174 428 L174 419 L174 429 L174 426 L174 421 L174 427 L176 421 L176 428 L176 424 L176 423 L176 422 L176 428 L178 424 L178 424 L178 425 L178 422 L178 426 L178 420 L180 425 L180 418 L180 426 L180 421 L180 424 L180 429 L182 422 L182 414 L182 426 L182 426 L182 419 L182 420 L184 419 L184 419 L184 426 L184 426 L184 418 L184 420 L186 422 L186 417 L186 417 L186 421 L186 422 L186 420 L188 420 L188 423 L188 422 L188 419 L188 418 L188 424 L190 418 L190 420 L190 421 L190 420 L190 423 L190 415 L192 422 L192 423 L192 419 L192 420 L192 416 L192 417 L194 421 L194 419 L194 417 L194 414 L194 414 L194 418 L196 416 L196 418 L196 413 L196 416 L196 411 L196 413 L198 412 L198 412 L198 410 L198 411 L198 411 L198 409 L200 409 L200 409 L200 407 L200 404 L200 405 L200 406 L202 401 L202 401 L202 401 L202 396 L202 398 L202 398 L204 390 L204 391 L204 391 L204 384 L204 383 L204 383 L206 376 L206 377 L206 376 L206 371 L206 371 L206 370 L208 372 L208 372 L208 372 L208 378 L208 379 L208 379 L210 386 L210 387 L210 385 L210 392 L210 394 L210 392 L212 399 L212 398 L212 399 L212 403 L212 403 L212 404 L214 406 L214 406 L214 408 L214 410 L214 409 L214 412 L216 410 L216 412 L216 410 L216 415 L216 413 L216 414 L218 405 L218 414 L218 414 L218 415 L218 416 L218 416 L220 415 L220 420 L220 416 L220 418 L220 416 L220 421 L222 420 L222 414 L222 418 L222 420 L222 421 L222 416 L224 420 L224 423 L224 418 L224 422 L224 423 L224 423 L226 421 L226 422 L226 419 L226 416 L226 419 L226 422 L228 404 L228 418 L228 423 L228 426 L228 428 L228 423 L230 422 L230 422 L230 424 L230 426 L230 423 L230 425 L232 416 L232 422 L232 424 L232 421 L232 426 L232 420 L234 419 L234 422 L234 425 L234 423 L234 422 L234 428 L236 425 L236 423 L236 427 L236 418 L236 420 L236 429 L238 422 L238 425 L238 424 L238 426 L238 428 L238 427 L240 404 L240 420 L240 425 L240 429 L240 421 L240 423 L242 428 L242 428 L242 426 L242 426 L242 421 L242 426 L244 427 L244 424 L244 423 L244 432 L244 426 L244 427 L246 431 L246 424 L246 428 L246 431 L246 424 L246 425 L248 422 L248 420 L248 419 L248 424 L248 430 L248 418 L250 426 L250 427 L250 420 L250 423 L250 427 L250 426 L252 429 L252 427 L252 431 L252 428 L252 430 L252 422 L254 426 L254 425 L254 424 L254 424 L254 426 L254 409 L256 426 L256 430 L256 421 L256 424 L256 420 L256 424 L258 421 L258 428 L258 426 L258 428 L258 431 L258 421 L260 426 L260 425 L260 425 L260 427 L260 423 L260 427 L262 422 L262 426 L262 427 L262 420 L262 422 L262 426 L264 429 L264 428 L264 430 L264 427 L264 428 L264 424 L266 425 L266 428 L266 423 L266 425 L266 430 L266 428 L268 428 L268 430 L268 424 L268 428 L268 427 L268 429 L270 424 L270 425 L270 426 L270 420 L270 423 L270 422 L272 423 L272 419 L272 423 L272 421 L272 431 L272 420 L274 425 L274 425 L274 425 L274 426 L274 426 L274 424 L276 424 L276 424 L276 420 L276 424 L276 424 L276 429 L278 425 L278 429 L278 430 L278 431 L278 426 L278 428 L280 425 L280 426 L280 422 L280 426 L280 425 L280 426 L282 428 L282 415 L282 425 L282 422 L282 425 L282 428 L284 428 L284 422 L284 432 L284 426 L284 425 L284 428 L286 425 L286 424 L286 425 L286 419 L286 423 L286 422 L288 427 L288 423 L288 427 L288 424 L288 425 L288 431 L290 423 L290 426 L290 422 L290 430 L290 423 L290 425 L292 423 L292 430 L292 425 L292 429 L292 428 L292 424 L294 428 L294 424 L294 428 L294 425 L294 428 L294 431 L296 427 L296 422 L296 429 L296 425 L296 422 L296 424 L298 427 L298 424 L298 423 L298 430 L298 426 L298 430 L300 427 L300 416 L300 426 L300 424 L300 426 L300 421 L302 424 L302 425 L302 426 L302 425 L302 423 L302 426 L304 428 L304 426 L304 425 L304 424 L304 425 L304 427 L306 424 L306 425 L306 427 L306 428 L306 429 L306 426 L308 418 L308 422 L308 421 L308 425 L308 421 L308 431 L310 430 L310 426 L310 424 L310 421 L310 424 L310 419 L312 424 L312 430 L312 424 L312 420 L312 422 L312 428 L314 426 L314 425 L314 420 L314 424 L314 425 L314 427 L316 429 L316 425 L316 428 L316 426 L316 425 L316 412 L318 424 L318 429 L318 431 L318 427 L318 420 L318 421 L320 423 L320 428 L320 424 L320 422 L320 423 L320 422 L322 423 L322 428 L322 427 L322 430 L322 427 L322 423 L324 422 L324 427 L324 427 L324 432 L324 423 L324 424 L326 419 L326 426 L326 423 L326 426 L326 425 L326 421 L328 426 L328 424 L328 429 L328 432 L328 424 L328 425 L330 431 L330 427 L330 430 L330 422 L330 423 L330 429 L332 431 L332 425 L332 430 L332 423 L332 416 L332 427 L334 431 L334 426 L334 425 L334 411 L334 422 L334 425 L336 420 L336 429 L336 426 L336 431 L336 428 L336 426 L338 429 L338 425 L338 423 L338 432 L338 430 L338 429 L340 423 L340 427 L340 423 L340 429 L340 427 L340 431 L342 420 L342 427 L342 422 L342 426 L342 428 L342 430 L344 424 L344 429 L344 422 L344 421 L344 429 L344 422 L346 427 L346 425 L346 432 L346 430 L346 419 L346 427 L348 428 L348 429 L348 426 L348 424 L348 427 L348 420 L350 424 L350 423 L350 425 L350 428 L350 416 L350 415 L352 425 L352 414 L352 420 L352 427 L352 430 L352 418 L354 425 L354 428 L354 428 L354 426 L354 422 L354 423 L356 424 L356 425 L356 421 L356 425 L356 426 L356 428 L358 423 L358 430 L358 419 L358 426 L358 430 L358 424 L360 419 L360 427 L360 422 L360 430 L360 430 L360 423 L362 425 L362 427 L362 428 L362 427 L362 429 L362 432 L364 424 L364 432 L364 424 L364 431 L364 425 L364 421 L366 427 L366 425 L366 417 L366 421 L366 423 L366 425 L368 420 L368 426 L368 426 L368 427 L368 430 L368 427 L370 429 L370 429 L370 427 L370 425 L370 427 L370 427 L372 427 L372 432 L372 428 L372 422 L372 424 L372 426 L374 427 L374 432 L374 425 L374 427 L374 427 L374 426 L376 422 L376 426 L376 421 L376 423 L376 428 L376 423 L378 422 L378 427 L378 425 L378 424 L378 426 L378 427 L380 425 L380 431 L380 432 L380 424 L380 430 L380 427 L382 423 L382 427 L382 425 L382 425 L382 426 L382 429 L384 422 L384 428 L384 432 L384 423 L384 425 L384 414 L386 421 L386 428 L386 426 L386 425 L386 426 L386 427 L388 429 L388 426 L388 420 L388 408 L388 427 L388 420 L390 421 L390 428 L390 424 L390 428 L390 424 L390 428 L392 426 L392 426 L392 424 L392 427 L392 426 L392 428 L394 422 L394 425 L394 425 L394 423 L394 427 L394 420 L396 428 L396 425 L396 411 L396 426 L396 427 L396 429 L398 421 L398 418 L398 424 L398 414 L398 430 L398 425 L400 422 L400 430 L400 425 L400 425 L400 419 L400 430 L402 422 L402 427 L402 428 L402 423 L402 422 L402 430 L404 428 L404 423 L404 423 L404 426 L404 425 L404 419 L406 427 L406 425 L406 424 L406 427 L406 422 L406 429 L408 412 L408 432 L408 424 L408 425 L408 423 L408 426 L410 426 L410 426 L410 422 L410 422 L410 426 L410 423 L412 418 L412 428 L412 429 L412 429 L412 427 L412 427 L414 428 L414 432 L414 429 L414 410 L414 429 L414 418 L416 426 L416 425 L416 426 L416 430 L416 425 L416 428 L418 427 L418 423 L418 423 L418 427 L418 424 L418 429 L420 426 L420 424 L420 429 L420 425 L420 425 L420 426 L422 426 L422 431 L422 430 L422 426 L422 431 L422 426 L424 426 L424 428 L424 427 L424 427 L424 426 L424 428 L426 425 L426 425 L426 423 L426 424 L426 429 L426 423 L428 424 L428 430 L428 419 L428 425 L428 426 L428 429 L430 430 L430 425 L430 421 L430 430 L430 422 L430 427 L432 429 L432 424 L432 423 L432 423 L432 421 L432 430 L434 424 L434 429 L434 417 L434 423 L434 424 L434 426 L436 423 L436 424 L436 431 L436 428 L436 429 L436 426 L438 422 L438 429 L438 428 L438 423 L438 425 L438 429 L440 407 L440 429 L440 427 L440 424 L440 429 L440 423 L442 427 L442 408 L442 422 L442 426 L442 429 L442 426 L444 428 L444 426 L444 423 L444 425 L444 428 L444 424 L446 422 L446 430 L446 427 L446 418 L446 421 L446 422 L448 414 L448 429 L448 421 L448 432 L448 430 L448 427 L450 423 L450 426 L450 415 L450 430 L450 424 L450 423 L452 424 L452 423 L452 426 L452 426 L452 431 L452 422 L454 427 L454 427 L454 428 L454 425 L454 431 L454 427 L456 429 L456 427 L456 422 L456 428 L456 419 L456 429 L458 421 L458 428 L458 429 L458 422 L458 423 L458 427 L460 429 L460 423 L460 427 L460 428 L460 430 L460 428 L462 426 L462 429 L462 430 L462 423 L462 431 L462 421 L464 421 L464 420 L464 423 L464 425 L464 425 L464 426 L466 424 L466 429 L466 420 L466 431 L466 427 L466 422 L468 424 L468 424 L468 423 L468 425 L468 428 L468 428 L470 427 L470 421 L470 427 L470 426 L470 419 L470 421 L472 419 L472 417 L472 427 L472 420 L472 422 L472 427 L474 417 L474 426 L474 424 L474 427 L474 425 L474 430 L476 425 L476 432 L476 420 L476 425 L476 432 L476 430 L478 425 L478 420 L478 423 L478 425 L478 424 L478 426 L480 426 L480 426 L480 429 L480 422 L480 426 L480 423 L482 432 L482 430 L482 427 L482 427 L482 424 L482 428 L484 422 L484 425 L484 426 L484 428 L484 427 L484 427 L486 421 L486 428 L486 426 L486 427 L486 428 L486 427 L488 425 L488 428 L488 418 L488 422 L488 427 L488 429 L490 423 L490 429 L490 429 L490 424 L490 425 L490 432 L492 410 L492 425 L492 423 L492 422 L492 425 L492 422 L494 428 L494 425 L494 430 L494 428 L494 418 L494 421 L496 430 L496 425 L496 420 L496 423 L496 427 L496 424 L498 427 L498 429 L498 423 L498 431 L498 423 L498 423 L500 424 L500 428 L500 429 L500 428 L500 424 L500 429 L502 428 L502 429 L502 427 L502 426 L502 423 L502 430 L504 432 L504 423 L504 429 L504 425 L504 426 L504 421 L506 424 L506 425 L506 422 L506 425 L506 426 L506 425 L508 424 L508 429 L508 419 L508 429 L508 425 L508 424 L510 422 L510 417 L510 425 L510 427 L510 421 L510 423 L512 422 L512 428 L512 428 L512 425 L512 428 L512 422 L514 412 L514 424 L514 426 L514 428 L514 427 L514 429 L516 424 L516 428 L516 425 L516 425 L516 432 L516 426 L518 427 L518 429 L518 429 L518 420 L518 427 L518 425 L520 429 L520 420 L520 425 L520 426 L520 429 L520 425 L522 427 L522 423 L522 428 L522 424 L522 425 L522 431 L524 431 L524 423 L524 430 L524 422 L524 428 L524 423 L526 424 L526 426 L526 428 L526 428 L526 420 L526 428 L528 429 L528 432 L528 428 L528 424 L528 416 L528 428 L530 426 L530 428 L530 424 L530 422 L530 424 L530 427 L532 427 L532 432 L532 429 L532 426 L532 424 L532 424 L534 409 L534 428 L534 421 L534 424 L534 428 L534 423 L536 418 L536 420 L536 423 L536 423 L536 426 L536 425 L538 421 L538 428 L538 418 L538 422 L538 429 L538 426 L540 426 L540 425 L540 432 L540 422 L540 426 L540 426 L542 421 L542 426 L542 432 L542 422 L542 420 L542 424 L544 424 L544 429 L544 430 L544 424 L544 417 L544 429 L546 423 L546 426 L546 426 L546 425 L546 410 L546 424 L548 423 L548 430 L548 424 L548 428 L548 424 L548 420 L550 429 L550 428 L550 429 L550 426 L550 421 L550 427 L552 426 L552 424 L552 427 L552 428 L552 425 L552 422 L554 425 L554 423 L554 428 L554 424 L554 423 L554 429 L556 429 L556 426 L556 421 L556 422 L556 430 L556 427 L558 424 L558 424 L558 424 L558 426 L558 429 L558 419 L560 427 L560 431 L560 427 L560 424 L560 428 L560 426 L562 415 L562 426 L562 424 L562 427 L562 426 L562 427 L564 425 L564 432 L564 427 L564 422 L564 431 L564 432 L566 427 L566 427 L566 426 L566 426 L566 426 L566 424 L568 427 L568 427 L568 415 L568 422 L568 425 L568 431 L570 423 L570 412 L570 431 L570 422 L570 423 L570 429 L572 427 L572 432 L572 428 L572 421 L572 431 L572 432 L574 423 L574 419 L574 422 L574 430 L574 424 L574 423 L576 428 L576 423 L576 426 L576 428 L576 430 L576 422 L578 423 L578 429 L578 431 L578 428 L578 424 L578 424 L580 425 L580 422 L580 424 L580 427 L580 428 L580 428 L582 427 L582 424 L582 426 L582 431 L582 424 L582 422 L584 429 L584 428 L584 426 L584 411 L584 423 L584 424 L586 429 L586 428 L586 426 L586 422 L586 423 L586 423 L588 429 L588 425 L588 426 L588 429 L588 422 L588 430 L590 425 L590 427 L590 427 L590 427 L590 428 L590 413 L592 423 L592 427 L592 429 L592 424 L592 425 L592 432 L594 424 L594 429 L594 427 L594 423 L594 424 L594 431 L596 424 L596 424 L596 430 L596 428 L596 425 L596 420 L598 432 L598 429 L598 420 L598 421 L598 420 L598 423 L600 423 L600 426 L600 422 L600 428 L600 428 L600 423 L602 424 L602 421 L602 414 L602 429 L602 428 L602 417 L604 426 L604 427 L604 416 L604 421 L604 425 L604 423 L606 429 L606 429 L606 422 L606 426 L606 425 L606 426 L608 429 L608 423 L608 429 L608 425 L608 425 L608 427 L610 425 L610 426 L610 427 L610 419 L610 425 L610 427 L612 423 L612 424 L612 419 L612 423 L612 422 L612 414 L614 422 L614 422 L614 430 L614 425 L614 426 L614 421 L616 427 L616 423 L616 419 L616 432 L616 424 L616 431 L618 427 L618 423 L618 425 L618 428 L618 430 L618 426 L620 420 L620 425 L620 421 L620 428 L620 426 L620 421 L622 422 L622 420 L622 423 L622 432 L622 427 L622 429 L624 432 L624 421 L624 420 L624 426 L624 423 L624 429 L626 432 L626 428 L626 406 L626 431 L626 413 L626 425 L628 430 L628 425 L628 416 L628 428 L628 426 L628 428 L630 424 L630 422 L630 426 L630 422 L630 423 L630 424 L632 423 L632 430 L632 424 L632 426 L632 426 L632 418 L634 429 L634 425 L634 402 L634 427 L634 428 L634 424 L636 428 L636 429 L636 427 L636 425 L636 429 L636 427 L638 429 L638 430 L638 422 L638 422 L638 424 L638 427 L640 423 L640 428 L640 424 L640 432 L640 431 L640 424 L642 421 L642 422 L642 425 L642 431 L642 422 L642 427 L644 423 L644 430 L644 423 L644 419 L644 420 L644 419 L646 424 L646 430 L646 427 L646 425 L646 428 L646 429 L648 432 L648 419 L648 426 L648 425 L648 424 L648 418 L650 416 L650 430 L650 423 L650 425 L650 430 L650 426 L652 427 L652 420 L652 427 L652 432 L652 424 L652 426 L654 429 L654 430 L654 427 L654 430 L654 423 L654 430 L656 427 L656 424 L656 431" stroke="#3cee3c" stroke-width="1" fill="none" shape-rendering="crispEdges"/><path d="M206.5 369 V43" stroke="#5cd85c" stroke-width="1"/></svg>
<div class="a" style="left:540px;top:153px;width:24px;height:24px;border:2px solid #ececec;border-radius:4px;background:#000"></div>
<svg class="a" style="left:543px;top:155px" width="18" height="19"><path d="M1 2.5H17M1 7.5H17M1 12.5H17M3.5 1V18M7.5 1V18M10.5 1V18M14.5 1V18" stroke="#a8a8a8" stroke-width="1"/><path d="M1 18 L1 16 L2 13 L3 16 L5 15 L6 12 L7 16 L9 15 L10 11 L11 16 L13 15 L14 7 L15 9 L16 15 L17 16 L17 18z" fill="#3cdc3c"/></svg>
<div class="t" style="left:580px;top:150px;font-size:11px;color:#f4f4f4">Left channel</div>
<div class="t" style="left:580px;top:166px;font-size:11px;color:#3cdc3c">Right channel</div>
<div class="a" style="left:1188px;top:142px;width:26px;height:450px;background:#d6d6d6"></div>
<div class="a" style="left:1209px;top:142px;width:5px;height:433px;background:#e2e2e2"></div>
<div class="t" style="left:1190px;top:143px;font-size:11px">dB</div>
<div class="t" style="left:1189px;top:161px;font-size:11px">-10</div>
<div class="t" style="left:1189px;top:185px;font-size:11px">-20</div>
<div class="t" style="left:1189px;top:209px;font-size:11px">-30</div>
<div class="t" style="left:1189px;top:233px;font-size:11px">-40</div>
<div class="t" style="left:1189px;top:257px;font-size:11px">-50</div>
<div class="t" style="left:1189px;top:281px;font-size:11px">-60</div>
<div class="t" style="left:1189px;top:305px;font-size:11px">-70</div>
<div class="t" style="left:1189px;top:329px;font-size:11px">-80</div>
<div class="t" style="left:1189px;top:353px;font-size:11px">-90</div>
<div class="t" style="left:1189px;top:376px;font-size:11px">-100</div>
<div class="t" style="left:1189px;top:400px;font-size:11px">-110</div>
<div class="t" style="left:1189px;top:424px;font-size:11px">-120</div>
<div class="t" style="left:1189px;top:448px;font-size:11px">-130</div>
<div class="t" style="left:1189px;top:472px;font-size:11px">-140</div>
<div class="t" style="left:1189px;top:496px;font-size:11px">-150</div>
<div class="t" style="left:1189px;top:520px;font-size:11px">-160</div>
<div class="t" style="left:1189px;top:544px;font-size:11px">-170</div>
<div class="a" style="left:528px;top:575px;width:686px;height:17px;background:#d6d6d6"></div>
<div class="t" style="left:558px;top:577px;width:60px;text-align:center;font-size:11px">2000</div>
<div class="t" style="left:617px;top:577px;width:60px;text-align:center;font-size:11px">4000</div>
<div class="t" style="left:677px;top:577px;width:60px;text-align:center;font-size:11px">6000</div>
<div class="t" style="left:736px;top:577px;width:60px;text-align:center;font-size:11px">8000</div>
<div class="t" style="left:796px;top:577px;width:60px;text-align:center;font-size:11px">10000</div>
<div class="t" style="left:855px;top:577px;width:60px;text-align:center;font-size:11px">12000</div>
<div class="t" style="left:915px;top:577px;width:60px;text-align:center;font-size:11px">14000</div>
<div class="t" style="left:974px;top:577px;width:60px;text-align:center;font-size:11px">16000</div>
<div class="t" style="left:1034px;top:577px;width:60px;text-align:center;font-size:11px">18000</div>
<div class="t" style="left:1093px;top:577px;width:60px;text-align:center;font-size:11px">20000</div>
<div class="t" style="left:1188px;top:577px;font-size:11px">Hz</div>
<div class="a" style="left:1214px;top:142px;width:19px;height:432px;background:repeating-conic-gradient(#f4f4f4 0 25%,#fdfdfd 0 50%) 0 0/2px 2px"></div>
<div class="sb" style="left:1214px;top:141px;width:19px;height:17px"></div>
<div class="a" style="left:1219px;top:147px;width:0;height:0;border-left:4px solid transparent;border-right:4px solid transparent;border-bottom:4px solid #000"></div>
<div class="sb" style="left:1214px;top:192px;width:19px;height:279px"></div>
<div class="sb" style="left:1214px;top:557px;width:19px;height:17px"></div>
<div class="a" style="left:1219px;top:564px;width:0;height:0;border-left:4px solid transparent;border-right:4px solid transparent;border-top:4px solid #000"></div>
<div class="sb" style="left:1214px;top:574px;width:19px;height:17px"></div>
<svg class="a" style="left:1216px;top:575px" width="16" height="15"><circle cx="6.5" cy="6.5" r="5" stroke="#000" stroke-width="2.3" fill="none"/><path d="M10 10 L14 14" stroke="#000" stroke-width="2.6"/><path d="M4 6.5 H9 M6.5 4 V9" stroke="#000" stroke-width="1.9"/></svg>
<div class="a" style="left:528px;top:592px;width:686px;height:18px;background:repeating-conic-gradient(#f4f4f4 0 25%,#fdfdfd 0 50%) 0 0/2px 2px;border-bottom:1px solid #6a6a6a"></div>
<div class="sb" style="left:528px;top:592px;width:16px;height:17px"></div>
<div class="a" style="left:533px;top:597px;width:0;height:0;border-top:4px solid transparent;border-bottom:4px solid transparent;border-right:4px solid #000"></div>
<div class="a" style="left:544px;top:592px;width:617px;height:18px;border-right:2px solid #6a6a6a;border-bottom:2px solid #6a6a6a;border-top:1px solid #fff;background:#f2f2f2"></div>
<div class="sb" style="left:1161px;top:592px;width:15px;height:17px"></div>
<div class="a" style="left:1167px;top:597px;width:0;height:0;border-top:4px solid transparent;border-bottom:4px solid transparent;border-left:4px solid #000"></div>
<div class="sb" style="left:1176px;top:592px;width:19px;height:17px"></div>
<svg class="a" style="left:1178px;top:593px" width="16" height="15"><circle cx="6.5" cy="6.5" r="4.5" stroke="#000" stroke-width="2.3" fill="none"/><path d="M10 10 L14 14" stroke="#000" stroke-width="2.6"/><path d="M4 6.5 H9 M6.5 4 V9" stroke="#000" stroke-width="1.9"/></svg>
<div class="sb" style="left:1195px;top:592px;width:19px;height:17px"></div>
<svg class="a" style="left:1197px;top:593px" width="16" height="15"><circle cx="6.5" cy="6.5" r="4.5" stroke="#000" stroke-width="2.3" fill="none"/><path d="M10 10 L14 14" stroke="#000" stroke-width="2.6"/><path d="M4 6.5 H9" stroke="#000" stroke-width="1.9"/></svg>
<div class="sb" style="left:1214px;top:592px;width:19px;height:17px"></div>
<svg class="a" style="left:1216px;top:593px" width="16" height="15"><circle cx="6.5" cy="6.5" r="4.5" stroke="#000" stroke-width="2.3" fill="none"/><path d="M10 10 L14 14" stroke="#000" stroke-width="2.6"/><path d="M4 6.5 H9" stroke="#000" stroke-width="1.9"/></svg>
<div class="a" style="left:529px;top:615px;width:271px;height:22px;border-top:1px solid #8a8a8a;border-left:2px solid #8a8a8a;background:#ececec"></div>
<div class="t" style="left:531px;top:620px;font-size:11px;letter-spacing:-0.2px">Cursor:&nbsp; 6098 Hz,&nbsp; left = -181.19 dB,&nbsp; right = -179.25 dB</div>
<div class="sb" style="left:813px;top:614px;width:27px;height:26px"></div>
<div class="sb" style="left:841px;top:614px;width:27px;height:26px"></div>
<div class="sb" style="left:869px;top:614px;width:27px;height:26px"></div>
<div class="sb" style="left:897px;top:614px;width:27px;height:26px"></div>
<div class="a" style="left:842px;top:615px;width:24px;height:23px;background:#cfd0d8"></div>
<div class="t" style="left:816px;top:617px;width:21px;text-align:center;font-family:'Liberation Serif',serif;font-weight:bold;font-size:21px">A</div>
<svg class="a" style="left:844px;top:617px" width="20" height="21" viewBox="0 0 20 21"><path d="M3 4 L9 1 L17 1 L17 8 L13 8 L13 5 L9 5 L7 8z" fill="#0a14c0"/><path d="M1 7 L5 7 L7 13 L10 13 L10 10 L14 15 L10 20 L10 17 L4 17z" fill="#0a14c0"/><path d="M19 9 L19 15 L16 19 L13 19 L16 15 L13 12 L17 12z" fill="#0a14c0"/></svg>
<svg class="a" style="left:871px;top:616px" width="23" height="22" viewBox="0 0 23 22"><path d="M2.5 19.5 L11 11" stroke="#2a2a2a" stroke-width="4.6" stroke-linecap="round"/><path d="M2.5 19.5 L11 11" stroke="#cfcfcf" stroke-width="2.4" stroke-linecap="round"/><circle cx="14.5" cy="7.5" r="6" fill="#a8a8a8" stroke="#2a2a2a" stroke-width="1.2"/><circle cx="14.5" cy="7.5" r="2.6" fill="#f2f2f2" stroke="#444" stroke-width="0.8"/><path d="M14.5 7.5 L23 0 L23 6z" fill="#f0f0f0"/></svg>
<svg class="a" style="left:900px;top:617px" width="21" height="21"><rect x="0.5" y="0.5" width="20" height="20" fill="#8e8e3c" stroke="#222"/><rect x="3.5" y="1" width="13" height="8.5" fill="#ececdf" stroke="#333" stroke-width="0.8"/><rect x="17" y="2" width="1.5" height="2" fill="#eee"/><rect x="3" y="12" width="15" height="8.5" fill="#0e0e0e"/><rect x="13" y="13.5" width="3" height="6" fill="#fff"/></svg>
<div class="t" style="left:933px;top:621px;font-size:11px">Scale</div>
<div class="a" style="left:966px;top:616px;width:70px;height:20px;border-top:2px solid #8a8a8a;border-left:2px solid #8a8a8a;border-right:1px solid #fff;border-bottom:1px solid #fff;background:#fff"></div>
<div class="t" style="left:970px;top:620px;font-size:12px">Linear</div>
<div class="sb" style="left:1017px;top:618px;width:17px;height:16px"></div>
<div class="a" style="left:1021px;top:624px;width:0;height:0;border-left:4px solid transparent;border-right:4px solid transparent;border-top:4px solid #000"></div>
<svg class="a" style="left:1225px;top:630px" width="11" height="11"><path d="M9 1h1v1h-1zM9 5h1v1h-1zM5 5h1v1h-1zM9 9h1v1h-1zM5 9h1v1h-1zM1 9h1v1h-1z" fill="#a0a0a0"/></svg>
<div class="fr" style="left:859px;top:190px;width:262px;height:177px;background:linear-gradient(180deg,rgba(100,100,100,0.97),rgba(55,55,55,0.97) 22px,rgba(52,52,52,0.97));box-shadow:inset 0 0 0 1px rgba(180,180,180,0.75),0 0 8px 2px rgba(0,0,0,0.6)"></div>
<div class="a" style="left:860px;top:191px;width:170px;height:26px;background:radial-gradient(ellipse 105px 17px at 48% 55%,rgba(138,138,138,0.95),rgba(125,125,125,0.85) 70%,rgba(90,90,90,0) 100%)"></div>
<div class="t" style="left:866px;top:198px;font-size:12px;letter-spacing:0.28px;color:#161616">Intermodulation distortion</div>
<div class="a" style="left:1068px;top:190px;width:46px;height:19px;border:1px solid rgba(10,10,10,0.9);border-top:none;border-radius:0 0 4px 4px;box-shadow:inset 0 0 0 1px rgba(160,160,160,0.6);background:rgba(40,40,40,0.5)"></div>
<svg class="a" style="left:1084px;top:193px" width="14" height="13"><path d="M3 2 L11 11 M11 2 L3 11" stroke="#fff" stroke-width="2.6"/></svg>
<div class="cl" style="left:865px;top:217px;width:251px;height:145px;background:linear-gradient(90deg,#f0f0f0,#f7f7f7);box-shadow:0 0 0 1px rgba(200,200,200,0.7)"></div>
<div class="a" style="left:872px;top:228px;width:238px;height:86px;border:1px solid #a0a0a0;box-shadow:inset 1px 1px 0 #fff,1px 1px 0 #fff"></div>
<div class="t" style="left:981px;top:240px;font-size:11px">Left</div>
<div class="t" style="left:1030px;top:240px;font-size:11px">Right</div>
<div class="t" style="left:881px;top:266px;font-size:11px;letter-spacing:-0.25px">IMD + noise:</div>
<div class="t" style="left:881px;top:288px;font-size:11px;letter-spacing:-0.25px">IMD + noise (A):</div>
<div class="a" style="left:971px;top:262px;width:56px;height:18px;border-top:2px solid #808080;border-left:2px solid #808080;border-right:1px solid #fff;border-bottom:1px solid #fff;background:#ececec"></div>
<div class="t" style="left:971px;top:266px;width:56px;text-align:center;font-size:12px;letter-spacing:-0.4px">0.00022</div>
<div class="a" style="left:1031px;top:262px;width:56px;height:18px;border-top:2px solid #808080;border-left:2px solid #808080;border-right:1px solid #fff;border-bottom:1px solid #fff;background:#ececec"></div>
<div class="t" style="left:1031px;top:266px;width:56px;text-align:center;font-size:12px;letter-spacing:-0.4px">0.00022</div>
<div class="a" style="left:971px;top:285px;width:56px;height:18px;border-top:2px solid #808080;border-left:2px solid #808080;border-right:1px solid #fff;border-bottom:1px solid #fff;background:#ececec"></div>
<div class="t" style="left:971px;top:289px;width:56px;text-align:center;font-size:12px;letter-spacing:-0.4px">0.00006</div>
<div class="a" style="left:1031px;top:285px;width:56px;height:18px;border-top:2px solid #808080;border-left:2px solid #808080;border-right:1px solid #fff;border-bottom:1px solid #fff;background:#ececec"></div>
<div class="t" style="left:1031px;top:289px;width:56px;text-align:center;font-size:12px;letter-spacing:-0.4px">0.00006</div>
<div class="t" style="left:1090px;top:266px;font-size:11px">%</div>
<div class="t" style="left:1090px;top:289px;font-size:11px">%</div>
<div class="a" style="left:955px;top:328px;width:75px;height:23px;border:1px solid #5a5a5a;box-shadow:inset 1px 1px 0 #fff,inset -1px -1px 0 #808080;background:#f0f0f0"></div>
<div class="t" style="left:955px;top:333px;width:75px;text-align:center;font-size:12px">OK</div>
</body></html>
